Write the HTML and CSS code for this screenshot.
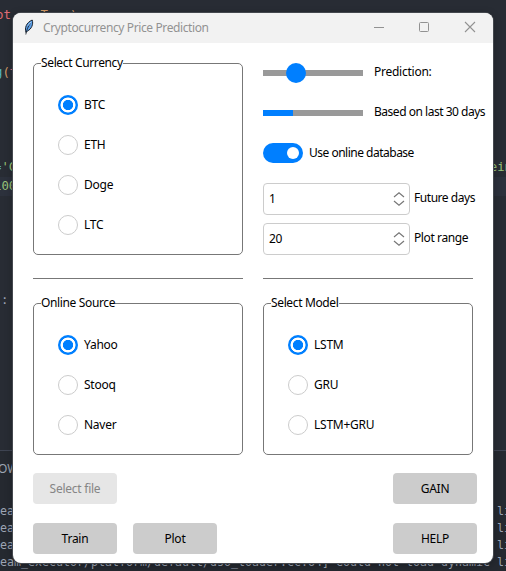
FILE: index.html
```html
<!DOCTYPE html>
<html lang="en">
<head>
<meta charset="utf-8">
<title>Cryptocurrency Price Prediction</title>
<link rel="stylesheet" href="styles.css">
</head>
<body>
<div class="editor">
  <div class="code">
    <pre class="r1"><span class="red">ot</span>   <span class="orange">=True)</span></pre>
    <pre class="r4"><span class="cyan">g</span><span class="orange">(</span><span class="red">t</span></pre>
    <pre class="r9 split"><span><span class="cyan">=</span><span class="green">'C</span></span><span class="green tail">ein</span></pre>
    <pre class="r10 current"><span class="green">100</span></pre>
    <pre class="r16">:</pre>
  </div>
  <div class="terminal">
    <pre class="tab">OW</pre>
    <pre class="log">eam_executor/platform/default/dso_loader.cc:64] Could not load dynamic li
eam_executor/platform/default/dso_loader.cc:64] Could not load dynamic li
eam_executor/platform/default/dso_loader.cc:64] Could not load dynamic li
eam_executor/platform/default/dso_loader.cc:64] Could not load dynamic li</pre>
  </div>
</div>

<main class="window">
  <header class="titlebar">
    <svg class="feather" width="12" height="18" viewBox="0 0 12 18"><path d="M3 14.4C1.6 10 3 4.8 9.2 2C10.6 6 8.6 11.2 4.4 13Z" fill="#5b9fe8" stroke="#18222e" stroke-width="1"/><path d="M2.8 16.5C3.5 12 5.3 8 7.4 5.4" fill="none" stroke="#111820" stroke-width=".8"/><path d="M5 7.6L8 4" stroke="#a5cdf5"/></svg>
    <h1>Cryptocurrency Price Prediction</h1>
    <svg class="controls" width="104" height="12" viewBox="0 0 104 12" fill="none" stroke="#929292"><path d="M1 6.5H11"/><rect x="46.5" y="1.5" width="9" height="9" rx="1"/><path d="M92 1L102 11M102 1L92 11" stroke-width="1.1"/></svg>
  </header>

  <div class="body">
    <div class="columns first">
      <fieldset class="group">
        <legend>Select Currency</legend>
        <label class="radio on"><i></i><span>BTC</span></label>
        <label class="radio"><i></i><span>ETH</span></label>
        <label class="radio"><i></i><span>Doge</span></label>
        <label class="radio"><i></i><span>LTC</span></label>
      </fieldset>
      <section class="settings">
        <div class="row"><div class="slider"><i></i></div><span>Prediction:</span></div>
        <div class="row"><div class="progress"><i></i></div><span class="based">Based on last 30 days</span></div>
        <div class="row"><div class="toggle"><i></i></div><span class="online">Use online database</span></div>
        <div class="row spin-row"><div class="spin"><span>1</span><svg width="12" height="14" viewBox="0 0 12 14"><path d="M1 5L6 .8L11 5M1 9L6 13.2L11 9"/></svg></div><span class="future">Future days</span></div>
        <div class="row spin-row"><div class="spin"><span>20</span><svg width="12" height="14" viewBox="0 0 12 14"><path d="M1 5L6 .8L11 5M1 9L6 13.2L11 9"/></svg></div><span class="range">Plot range</span></div>
      </section>
    </div>
    <div class="columns rules"><hr><hr></div>
    <div class="columns">
      <fieldset class="group short">
        <legend>Online Source</legend>
        <label class="radio on"><i></i><span>Yahoo</span></label>
        <label class="radio"><i></i><span>Stooq</span></label>
        <label class="radio"><i></i><span>Naver</span></label>
      </fieldset>
      <fieldset class="group short">
        <legend>Select Model</legend>
        <label class="radio on"><i></i><span>LSTM</span></label>
        <label class="radio"><i></i><span>GRU</span></label>
        <label class="radio"><i></i><span>LSTM+GRU</span></label>
      </fieldset>
    </div>
    <div class="actions upper">
      <button disabled>Select file</button>
      <button class="end">GAIN</button>
    </div>
    <div class="actions">
      <button>Train</button>
      <button>Plot</button>
      <button class="end">HELP</button>
    </div>
  </div>
</main>
</body>
</html>
```
FILE: styles.css
```css
* { box-sizing: border-box; }
body {
  margin: 0;
  width: 506px;
  height: 571px;
  overflow: hidden;
  position: relative;
  background: #282c34;
  font: 12px/16px "Noto Sans", "Open Sans", sans-serif;
  letter-spacing: -0.25px;
  color: #000;
}

/* Editor behind the dialog */
.editor {
  position: absolute;
  inset: 0;
  overflow: hidden;
  font-family: "DejaVu Sans Mono", monospace;
  letter-spacing: 0;
  color: #9da5b4;
}
pre { margin: 0; font-family: inherit; white-space: pre; }
.code {
  display: grid;
  grid-template-rows: repeat(23, 19px);
  height: 450px;
  padding-top: 6px;
  font-size: 12.3px;
  line-height: 19px;
}
.r1 { grid-row: 1; text-indent: -4px; }
.r4 { grid-row: 4; text-indent: -5px; }
.r9 { grid-row: 9; text-indent: -6px; }
.r10 { grid-row: 10; text-indent: -6px; }
.r16 { grid-row: 16; text-indent: 1px; }
.split { display: flex; justify-content: space-between; }
.tail { margin-right: -6px; text-indent: 0; }
.current { background: #2c313c; }
.red { color: #e06c75; }
.orange { color: #d19a66; }
.cyan { color: #56b6c2; }
.green { color: #98c379; }
.terminal { height: 121px; border-top: 1px solid #3e4452; background: #252930; }
.tab { height: 52px; padding-top: 10px; text-indent: -2px; font: 12px/16px "Noto Sans", sans-serif; }
.log { font-size: 11.63px; line-height: 17px; padding-left: 0; }

/* Dialog */
.window {
  position: absolute;
  left: 13px;
  top: 13px;
  width: 480px;
  height: 550px;
  border-radius: 8px;
  overflow: hidden;
  background: #fff;
  box-shadow: 0 0 0 1px #44484e, 0 2px 9px rgba(0, 0, 0, .3);
}
.titlebar {
  display: flex;
  align-items: center;
  height: 30px;
  padding: 0 16px 0 10px;
  background: #f2f2f2;
}
.feather { margin-top: -2px; }
h1 { margin: 0 0 0 8px; font-size: 12px; font-weight: 400; color: #929292; letter-spacing: -.39px; }
.controls { margin: -2px 0 0 auto; }
.body { padding: 20px 16px 0 20px; }
.columns { display: grid; grid-template-columns: 210px 226px; gap: 20px; }
.first { height: 192px; }

.group {
  width: 210px;
  height: 200px;
  margin: -8px 0 0;
  padding: 24px 0 0 24px;
  border: 1px solid #777;
  border-radius: 5px;
}
.group.short { height: 160px; }
.group legend { margin-left: -17px; padding: 0; height: 16px; white-space: nowrap; letter-spacing: -.36px; }
.radio { display: flex; align-items: center; height: 20px; margin-bottom: 20px; }
.radio i {
  display: grid;
  place-items: center;
  width: 20px;
  height: 20px;
  margin-right: 6px;
  border: 1px solid #ccc;
  border-radius: 50%;
}
.radio.on i {
  border: 0;
  background: radial-gradient(circle, #007fff 4.8px, #fff 5.4px, #fff 7.2px, #007fff 7.8px);
}

.settings { white-space: nowrap; }
.row { display: flex; align-items: center; height: 20px; margin-bottom: 20px; }
.slider, .progress {
  display: flex;
  flex: none;
  align-items: center;
  width: 100px;
  height: 6px;
  margin-right: 11px;
  background: #999;
}
.slider i { width: 20px; height: 20px; margin-left: 23px; border-radius: 50%; background: #007fff; }
.progress i { width: 30px; height: 6px; background: #007fff; }
.row > span { margin-top: -2px; }
.row > .based { letter-spacing: -.48px; }
.row > .online { margin-top: 0; letter-spacing: -.5px; }
.row > .future { letter-spacing: -.45px; }
.row > .range { letter-spacing: -.4px; }
.toggle {
  display: flex;
  align-items: center;
  justify-content: flex-end;
  width: 40px;
  height: 20px;
  margin-right: 6px;
  padding-right: 4px;
  border-radius: 10px;
  background: #007fff;
}
.toggle i { width: 12px; height: 12px; border-radius: 50%; background: #fff; }
.row.spin-row { height: 32px; margin-bottom: 8px; }
.spin {
  display: flex;
  align-items: center;
  justify-content: space-between;
  width: 147px;
  height: 32px;
  margin-right: 4px;
  padding: 0 4px 0 5px;
  border: 1px solid #ccc;
  border-radius: 4px;
}
.spin svg { fill: none; stroke: #777; stroke-width: 1.2; }

.rules { height: 48px; padding-top: 23px; }
hr { width: 210px; height: 1px; margin: 0; border: 0; background: #777; }

.actions { display: flex; gap: 16px; height: 31px; margin-top: 19px; }
.actions.upper { margin-top: 18px; }
button {
  width: 84px;
  height: 31px;
  padding: 1px 0 0;
  border: 0;
  border-radius: 4px;
  background: #ccc;
  color: #000;
  font: inherit;
  letter-spacing: inherit;
}
button:disabled { background: #e6e6e6; color: #858585; }
.end { margin-left: auto; }
```
